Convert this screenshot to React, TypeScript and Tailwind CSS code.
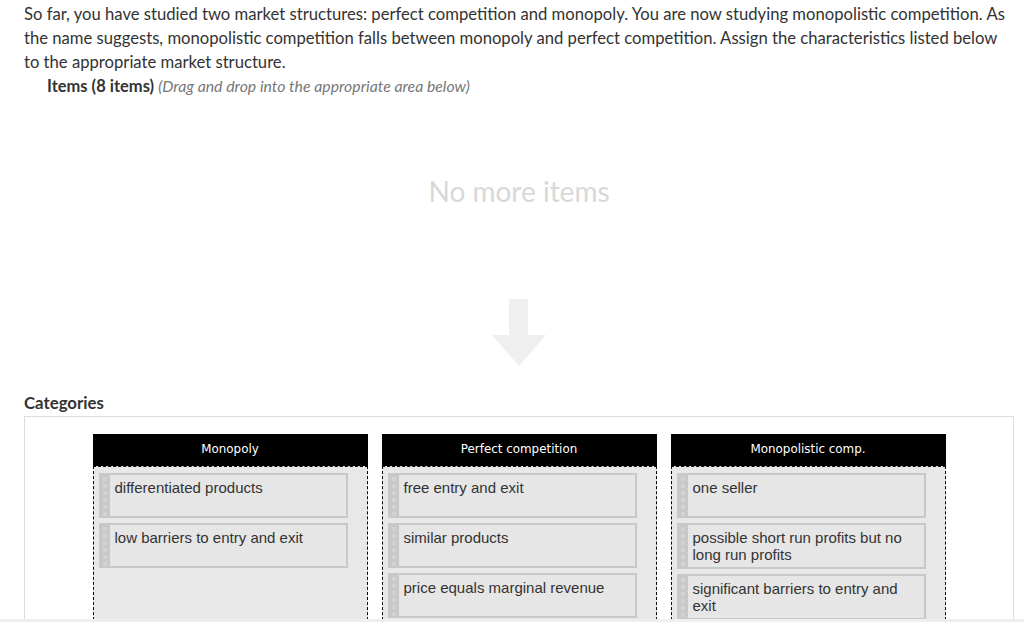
import React from "react";

const lato = { fontFamily: "Lato, 'Open Sans', sans-serif" };

function Grip() {
  return (
    <div className="w-[9px] shrink-0 bg-[#c8c8c8] flex flex-col items-center gap-[3px] pt-[2px]">
      {[0, 1, 2, 3, 4, 5].map((i) => (
        <div key={i} className="w-[4px] h-[4px] bg-[#d3d3d3]" />
      ))}
    </div>
  );
}

function Item({ text }: { text: string }) {
  return (
    <div className="flex border-2 border-[#c8c8c8] bg-[#e6e6e6] min-h-[44px] overflow-hidden">
      <Grip />
      <div
        className="pl-[5px] pr-3 pt-[4px] pb-[4px] text-[15px] leading-[17px] text-[#333]"
        style={{ fontFamily: "'Liberation Sans', Arial, sans-serif" }}
      >
        {text}
      </div>
    </div>
  );
}

function Column({ title, items }: { title: string; items: string[] }) {
  return (
    <div className="w-[275px] flex flex-col">
      <div
        className="h-[32px] bg-black text-white text-[11.9px] flex items-center justify-center"
        style={{ fontFamily: "'DejaVu Sans', Verdana, sans-serif" }}
      >
        {title}
      </div>
      <div className="border border-dashed border-black bg-[#e8e8e8] pt-[6px] pl-[5px] pr-[19px] min-h-[260px] flex flex-col gap-[5px]">
        {items.map((t) => (
          <Item key={t} text={t} />
        ))}
      </div>
    </div>
  );
}

export default function App() {
  return (
    <div className="h-[622px] overflow-hidden flex flex-col bg-white" style={lato}>
      <div className="flex-1 overflow-hidden pl-6 pr-[10px] pt-[2px]">
        <p className="text-[16.65px] leading-6 text-[#333]">
          So far, you have studied two market structures: perfect competition and monopoly. You are now studying
          monopolistic competition. As the name suggests, monopolistic competition falls between monopoly and perfect
          competition. Assign the characteristics listed below to the appropriate market structure.
        </p>
        <div className="pl-[23px] leading-6">
          <span className="font-bold text-[16.5px] text-[#333]">Items (8 items)</span>{" "}
          <span className="italic text-[15.8px] text-[#777]">(Drag and drop into the appropriate area below)</span>
        </div>
        <div className="flex flex-col items-center">
          <div className="mt-[77px] text-[28px] leading-8 text-[#d8d8d8]">No more items</div>
          <svg className="mt-[92px]" width="54" height="67" viewBox="0 0 54 67">
            <rect x="17" y="0" width="19" height="37" fill="#efefef" />
            <polygon points="0,36 54,36 27,67" fill="#efefef" />
          </svg>
        </div>
        <div className="mt-[25px] text-[16.8px] font-bold leading-6 text-[#333]">Categories</div>
        <div className="mt-[1px] border border-[#dcdcdc] pt-[17px] flex justify-center gap-[14px] h-[400px]">
          <Column title="Monopoly" items={["differentiated products", "low barriers to entry and exit"]} />
          <Column
            title="Perfect competition"
            items={["free entry and exit", "similar products", "price equals marginal revenue"]}
          />
          <Column
            title="Monopolistic comp."
            items={[
              "one seller",
              "possible short run profits but no long run profits",
              "significant barriers to entry and exit",
            ]}
          />
        </div>
      </div>
      <div className="h-[3px] bg-[#efefef] shrink-0" />
    </div>
  );
}
